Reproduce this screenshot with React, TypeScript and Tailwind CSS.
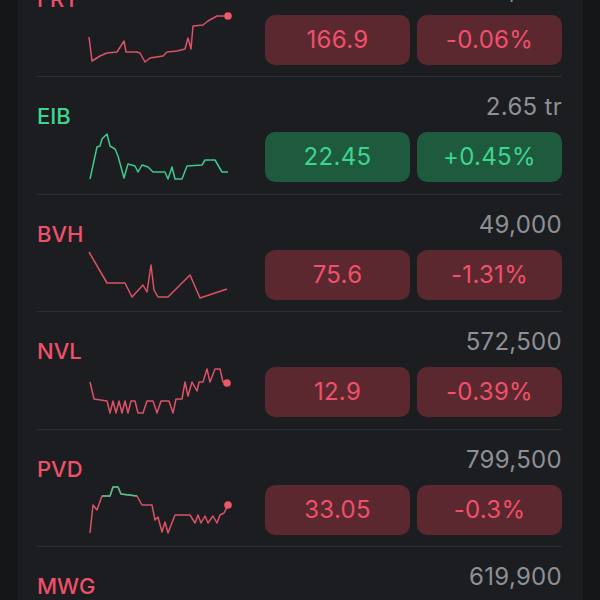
import React from 'react';

type Row = {
  ticker: string;
  up: boolean;
  volume: string;
  price: string;
  change: string;
  line: number[][];
  green?: number[][];
  dot?: boolean;
};

const rows: Row[] = [
  {
    ticker: 'FRT',
    up: false,
    volume: '354,200',
    price: '166.9',
    change: '-0.06%',
    dot: true,
    line: [[0,22],[3,46],[11,41],[18,38],[28,37],[35,26],[37,37],[48,37],[51,38],[56,47],[61,43],[74,41],[78,37],[88,36],[96,34],[99,23],[102,34],[104,11],[114,10],[119,6],[128,1],[139,1]],
  },
  {
    ticker: 'EIB',
    up: true,
    volume: '2.65 tr',
    price: '22.45',
    change: '+0.45%',
    line: [[1,47],[8,15],[11,14],[13,7],[18,2],[21,14],[26,17],[29,24],[35,46],[39,32],[46,34],[49,40],[53,33],[59,35],[64,40],[76,40],[79,47],[83,35],[86,47],[93,47],[98,34],[113,33],[116,28],[126,28],[133,40],[139,40]],
  },
  {
    ticker: 'BVH',
    up: false,
    volume: '49,000',
    price: '75.6',
    change: '-1.31%',
    line: [[0,2],[18,33],[36,33],[43,47],[54,35],[58,42],[62,15],[65,40],[69,47],[79,47],[101,25],[111,48],[138,39]],
  },
  {
    ticker: 'NVL',
    up: false,
    volume: '572,500',
    price: '12.9',
    change: '-0.39%',
    dot: true,
    line: [[1,15],[5,32],[18,34],[21,46],[24,34],[27,46],[30,34],[33,46],[36,34],[39,46],[42,34],[46,34],[49,46],[54,46],[58,34],[64,34],[68,46],[72,34],[80,34],[84,46],[87,32],[93,32],[96,15],[99,29],[103,15],[108,24],[110,15],[114,15],[118,2],[121,15],[126,2],[131,2],[134,15],[138,16]],
  },
  {
    ticker: 'PVD',
    up: false,
    volume: '799,500',
    price: '33.05',
    change: '-0.3%',
    dot: true,
    line: [[1,48],[4,20],[8,25],[13,11],[21,11],[24,2],[29,2],[32,9],[48,11],[53,20],[63,20],[66,35],[69,32],[73,47],[76,37],[79,48],[86,30],[101,30],[106,38],[109,30],[112,38],[116,31],[119,38],[124,31],[128,38],[131,30],[135,28],[139,20]],
    green: [[13,11],[21,11],[24,2],[29,2],[32,9],[48,11]],
  },
  {
    ticker: 'MWG',
    up: false,
    volume: '619,900',
    price: '',
    change: '',
    line: [],
  },
];

const pts = (p: number[][]) => p.map((q) => q.join(',')).join(' ');

function Spark({ row }: { row: Row }) {
  const color = row.up ? '#3fc98b' : '#dc5266';
  const last = row.line[row.line.length - 1];
  return (
    <svg width="140" height="50" viewBox="0 0 140 50" className="overflow-visible">
      <polyline points={pts(row.line)} fill="none" stroke={color} strokeWidth="1.5" strokeLinejoin="round" />
      {row.green && (
        <polyline points={pts(row.green)} fill="none" stroke="#3fc98b" strokeWidth="1.5" strokeLinejoin="round" />
      )}
      {row.dot && last && <circle cx={last[0]} cy={last[1]} r="3.8" fill="#f0566b" />}
    </svg>
  );
}

function StockRow({ row }: { row: Row }) {
  const text = row.up ? 'text-[#3dd68f]' : 'text-[#f0506a]';
  const badge = row.up ? 'bg-[#1d5a3e]' : 'bg-[#5b2830]';
  return (
    <div className="flex h-[117.5px] border-b border-[#2a2d31]">
      <div className="flex-1 pt-[28px]">
        <div className={`text-[22px] leading-none font-medium ${text}`}>{row.ticker}</div>
        {row.line.length > 0 && (
          <div className="mt-[5px] ml-[52px]">
            <Spark row={row} />
          </div>
        )}
      </div>
      <div className="flex flex-col items-end pt-[18px]">
        <div className="text-[24px] leading-none tracking-[0.3px] text-[#8e9095]">{row.volume}</div>
        {row.price && (
          <div className="mt-[13px] flex gap-[7px]">
            <div className={`flex h-[50px] w-[145px] items-center justify-center rounded-[10px] text-[24px] tracking-[0.3px] ${badge} ${text}`}>
              {row.price}
            </div>
            <div className={`flex h-[50px] w-[145px] items-center justify-center rounded-[10px] text-[24px] tracking-[0.3px] ${badge} ${text}`}>
              {row.change}
            </div>
          </div>
        )}
      </div>
    </div>
  );
}

export default function App() {
  return (
    <div className="flex h-[600px] w-[600px] overflow-hidden bg-[#141618] font-['Inter',sans-serif]">
      <div className="w-[18px] shrink-0" />
      <div className="flex-1 bg-[#1b1d20] pl-[19px] pr-[21px]">
        <div className="-mt-[40.5px]">
          {rows.map((row) => (
            <StockRow key={row.ticker} row={row} />
          ))}
        </div>
      </div>
      <div className="w-[17px] shrink-0" />
    </div>
  );
}
